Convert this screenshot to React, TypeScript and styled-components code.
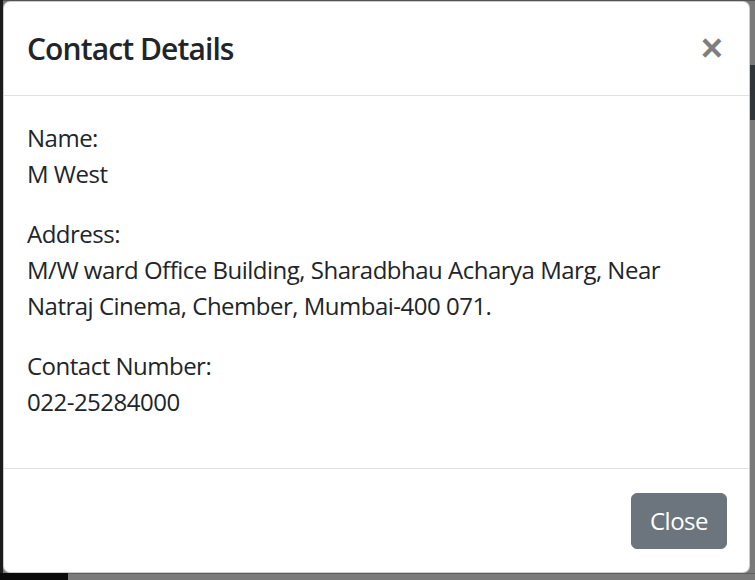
import React from "react";
import styled, { createGlobalStyle } from "styled-components";

const GlobalStyle = createGlobalStyle`
  html, body {
    margin: 0;
    padding: 0;
    background: #7a7a7a;
  }
  * { box-sizing: border-box; }
`;

const Backdrop = styled.div`
  width: 755px;
  height: 580px;
  padding: 1px 5px 7px 3px;
  display: flex;
  flex-direction: column;
  background:
    linear-gradient(#30353a, #30353a) right 0 top 65px / 5px 55px no-repeat,
    linear-gradient(#0b0b0b, #0b0b0b) left 0 bottom 0 / 68px 7px no-repeat,
    linear-gradient(#5e5e5e, #5e5e5e) left 0 bottom 6px / 100% 1px no-repeat,
    linear-gradient(#1c1c1c, #1c1c1c) left 0 top 0 / 3px 100% no-repeat,
    linear-gradient(#525252, #525252) left 0 top 0 / 100% 1px no-repeat,
    #7a7a7a;
  font-family: "Open Sans", "Noto Sans", Arial, sans-serif;
  color: #212529;
`;

const Modal = styled.div`
  background: #fff;
  border: 1px solid rgba(0, 0, 0, 0.2);
  border-radius: 7px;
  display: flex;
  flex-direction: column;
  overflow: hidden;
`;

const Header = styled.div`
  display: flex;
  align-items: flex-start;
  justify-content: space-between;
  padding: 24px 24px 24px 23px;
  border-bottom: 1px solid #dee2e6;
`;

const Title = styled.h5`
  margin: 0;
  font-size: 30px;
  font-weight: 600;
  line-height: 1.5;
  letter-spacing: -0.9px;
  color: #212529;
`;

const CloseX = styled.button`
  padding: 27px 26px 21px 24px;
  margin: -24px -24px -24px auto;
  background: transparent;
  border: 0;
  font-family: "Liberation Sans", Arial, sans-serif;
  font-size: 38px;
  font-weight: 700;
  line-height: 1;
  color: #000;
  opacity: 0.5;
  text-shadow: 0 1px 0 #fff;
  cursor: pointer;
`;

const Body = styled.div`
  padding: 24px 24px 24px 23px;
  font-size: 24px;
  line-height: 1.5;
  letter-spacing: -0.5px;
`;

const Para = styled.p`
  margin: 0 0 24px;
`;

const Footer = styled.div`
  display: flex;
  justify-content: flex-end;
  align-items: center;
  padding: 18px 16px 18px 18px;
  border-top: 1px solid #dee2e6;
`;

const SecondaryButton = styled.button`
  margin: 6px;
  padding: 9px 18px;
  font-family: inherit;
  font-size: 24px;
  line-height: 1.5;
  letter-spacing: -0.5px;
  color: #fff;
  background: #6c757d;
  border: 1px solid #6c757d;
  border-radius: 6px;
  cursor: pointer;
`;

export default function App() {
  return (
    <>
      <GlobalStyle />
      <Backdrop>
        <Modal>
          <Header>
            <Title>Contact Details</Title>
            <CloseX aria-label="Close">×</CloseX>
          </Header>
          <Body>
            <Para>
              Name:
              <br />
              M West
            </Para>
            <Para>
              Address:
              <br />
              M/W ward Office Building, Sharadbhau Acharya Marg, Near
              <br />
              Natraj Cinema, Chember, Mumbai-400 071.
            </Para>
            <Para>
              Contact Number:
              <br />
              022-25284000
            </Para>
          </Body>
          <Footer>
            <SecondaryButton>Close</SecondaryButton>
          </Footer>
        </Modal>
      </Backdrop>
    </>
  );
}
